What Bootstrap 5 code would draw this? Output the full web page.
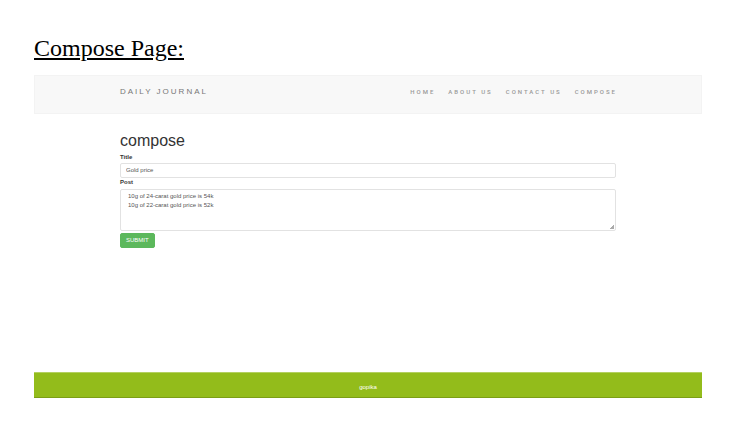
<!DOCTYPE html>
<html lang="en">
<head>
<meta charset="utf-8">
<meta name="viewport" content="width=device-width, initial-scale=1">
<title>Compose Page</title>
<link href="https://cdn.jsdelivr.net/npm/bootstrap@5.3.0/dist/css/bootstrap.min.css" rel="stylesheet">
<style>
  body { font-family: "Liberation Sans", Arial, sans-serif; font-size: 6px; line-height: 9px; color: #333; background: #fff; padding: 34px 31px 33px 34px; }
  .page-heading { font-family: "Liberation Serif", "Times New Roman", serif; font-size: 24px; line-height: 29px; color: #000; text-underline-offset: 2px; text-decoration-thickness: 2px; margin-bottom: 12px; }
  .site-gutter { padding-left: 86px; padding-right: 86px; }
  .site-nav { background: #f8f8f8; border: 1px solid #f3f3f3; padding-top: 11px; padding-bottom: 16px; }
  .site-nav .site-gutter { padding-left: 85px; padding-right: 84px; }
  .site-nav .navbar-brand { font-size: 8px; line-height: 10px; letter-spacing: 2px; color: #777; }
  .site-nav .nav-link { font-family: Roboto, "Liberation Sans", sans-serif; font-size: 6px; font-weight: 500; line-height: 9px; letter-spacing: 2px; color: #999; }
  .menu { gap: 13px; }
  h2 { font-size: 16px; line-height: 18px; margin-bottom: 3px; }
  .compose-form { padding-top: 18px; }
  .compose-form .form-label { font-weight: 700; line-height: 9px; color: #333; }
  .compose-form .title-label { margin-bottom: 1px; }
  .compose-form .form-control { font-size: 6px; line-height: 9px; color: #555; padding: 2px 5px; border-color: #e2e2e2; border-radius: 2px; min-height: 0; }
  .compose-form textarea.form-control { height: 42px; padding: 2px 7px; margin-top: 2px; }
  .compose-form textarea::-webkit-resizer { background: linear-gradient(135deg, transparent 50%, #aaa 50%) right 1px bottom 1px / 4px 4px no-repeat; }
  .btn-submit { font-size: 6px; line-height: 9px; padding: 2px 5px; border-radius: 2px; margin-top: 2px; --bs-btn-color: #fff; --bs-btn-bg: #5cb85c; --bs-btn-border-color: #5cb85c; --bs-btn-hover-color: #fff; --bs-btn-hover-bg: #449d44; }
  .site-footer { background: #93bc1b; border-top: 1px solid #b4d060; border-bottom: 1px solid #7b9e16; padding: 10px 0 5px; color: #fff; }
</style>
</head>
<body class="d-flex flex-column min-vh-100">
  <h1 class="page-heading text-decoration-underline fw-normal">Compose Page:</h1>
  <nav class="navbar site-nav" aria-label="Main">
    <div class="site-gutter d-flex justify-content-between align-items-start w-100">
      <a class="navbar-brand p-0 m-0" href="#">DAILY JOURNAL</a>
      <ul class="nav menu">
        <li class="nav-item"><a class="nav-link p-0" href="#">HOME</a></li>
        <li class="nav-item"><a class="nav-link p-0" href="#">ABOUT US</a></li>
        <li class="nav-item"><a class="nav-link p-0" href="#">CONTACT US</a></li>
        <li class="nav-item"><a class="nav-link p-0" href="#">COMPOSE</a></li>
      </ul>
    </div>
  </nav>
  <main class="site-gutter compose-form flex-grow-1">
    <h2 class="fw-normal">compose</h2>
    <form>
      <label class="form-label title-label d-block" for="title">Title</label>
      <input class="form-control d-block" id="title" type="text" value="Gold price">
      <label class="form-label d-block m-0" for="post">Post</label>
      <textarea class="form-control d-block" id="post">10g of 24-carat gold price is 54k
10g of 22-carat gold price is 52k</textarea>
      <button class="btn btn-submit" type="submit">SUBMIT</button>
    </form>
  </main>
  <footer class="site-footer text-center">gopika</footer>
<script src="https://cdn.jsdelivr.net/npm/bootstrap@5.3.0/dist/js/bootstrap.bundle.min.js"></script>
</body>
</html>
